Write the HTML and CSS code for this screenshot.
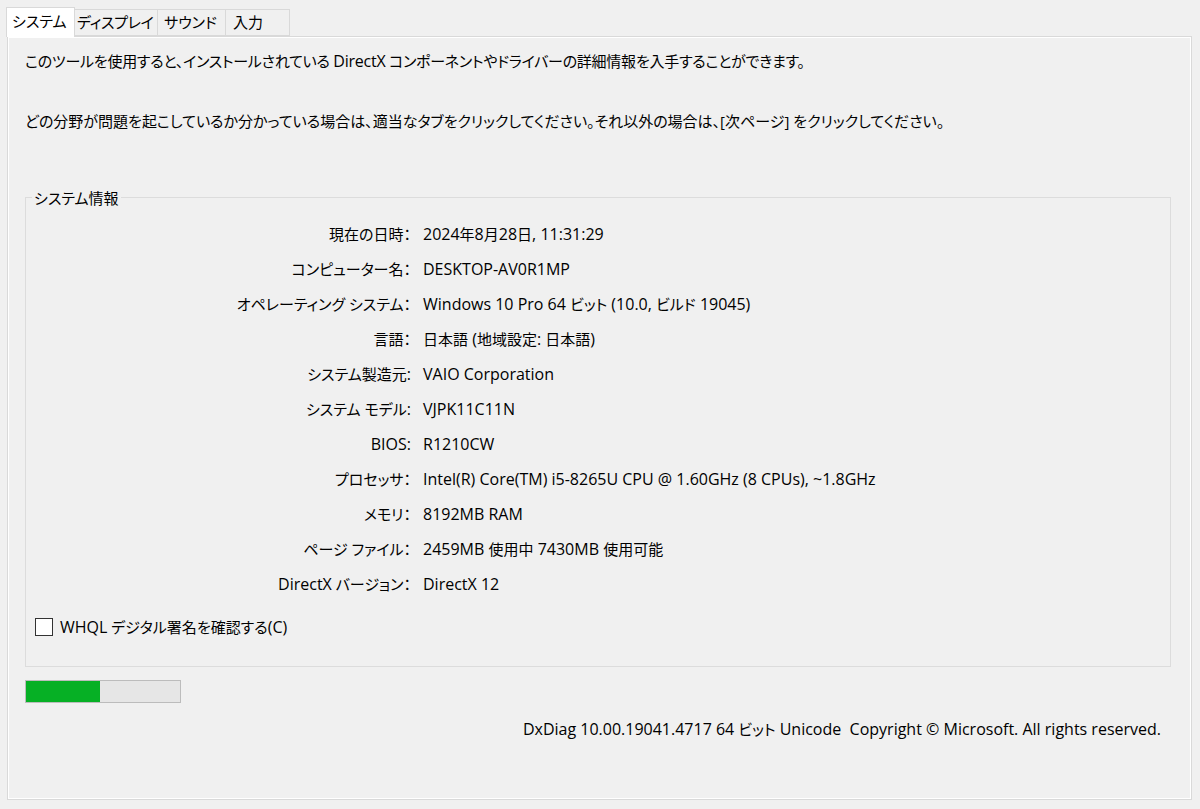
FILE: index.html
```html
<!DOCTYPE html>
<html lang="ja">
<head>
    <meta charset="UTF-8">
    <meta name="viewport" content="width=device-width, initial-scale=1.0">
    <title>DirectX 診断ツール</title>
    <link rel="stylesheet" href="styles.css">
</head>
<body>
    <div class="tabs">
        <div class="tab active">システム</div>
        <div class="tab">ディスプレイ</div>
        <div class="tab">サウンド</div>
        <div class="tab">入力</div>
    </div>

    <div class="panel">
        <p class="intro">このツールを使用すると、インストールされている <span class="en">DirectX</span> コンポーネントやドライバーの詳細情報を入手することができます。</p>
        <p class="intro">どの分野が問題を起こしているか分かっている場合は、適当なタブをクリックしてください。それ以外の場合は、[次ページ] をクリックしてください。</p>

        <fieldset class="group">
            <legend>システム情報</legend>
            <div class="info">
                <div class="label">現在の日時：</div>
                <div class="value">2024<span class="ja">年</span>8<span class="ja">月</span>28<span class="ja">日</span>, 11:31:29</div>
                <div class="label">コンピューター名：</div>
                <div class="value">DESKTOP-AV0R1MP</div>
                <div class="label">オペレーティング システム：</div>
                <div class="value">Windows 10 Pro 64 <span class="ja">ビット</span> (10.0, <span class="ja">ビルド</span> 19045)</div>
                <div class="label">言語：</div>
                <div class="value"><span class="ja">日本語</span> (<span class="ja">地域設定</span>: <span class="ja">日本語</span>)</div>
                <div class="label">システム製造元<span class="en">:</span></div>
                <div class="value">VAIO Corporation</div>
                <div class="label">システム モデル<span class="en">:</span></div>
                <div class="value">VJPK11C11N</div>
                <div class="label"><span class="en">BIOS:</span></div>
                <div class="value">R1210CW</div>
                <div class="label">プロセッサ：</div>
                <div class="value">Intel(R) Core(TM) i5-8265U CPU @ 1.60GHz (8 CPUs), ~1.8GHz</div>
                <div class="label">メモリ：</div>
                <div class="value">8192MB RAM</div>
                <div class="label">ページ ファイル：</div>
                <div class="value">2459MB <span class="ja">使用中</span> 7430MB <span class="ja">使用可能</span></div>
                <div class="label"><span class="en">DirectX</span> バージョン：</div>
                <div class="value">DirectX 12</div>
            </div>
            <label class="check">
                <span class="box"></span>
                <span><span class="en">WHQL</span> デジタル署名を確認する<span class="en">(C)</span></span>
            </label>
        </fieldset>

        <div class="progress">
            <div class="progress-fill" style="width: 48%"></div>
        </div>

        <div class="footer">DxDiag 10.00.19041.4717 64 <span class="ja">ビット</span> Unicode&nbsp; Copyright © Microsoft. All rights reserved.</div>
    </div>
</body>
</html>
```

FILE: styles.css
```css
body {
    font-family: "Open Sans", "Noto Sans CJK JP", sans-serif;
    font-feature-settings: "palt";
    font-size: 15px;
    color: #000;
    background-color: #f0f0f0;
    margin: 0;
    width: 1200px;
    height: 809px;
    overflow: hidden;
}

/* latin runs are drawn a size up, japanese a size down */
.en {
    font-size: 16px;
}

.ja {
    font-size: 15px;
}

.tabs {
    display: flex;
    align-items: flex-end;
    height: 29px;
    padding: 7px 0 0 6px;
}

.tab {
    height: 27px;
    line-height: 24px;
    padding: 0 0 0 4px;
    border: 1px solid #d9d9d9;
    border-left: none;
    background-color: #f0f0f0;
    box-sizing: border-box;
    white-space: nowrap;
    overflow: hidden;
}

    .tab:nth-child(2) {
        width: 83px;
        padding-left: 2px;
        letter-spacing: -0.3px;
    }

    .tab:nth-child(3) {
        width: 68px;
        padding-left: 6px;
    }

    .tab:nth-child(4) {
        width: 64px;
        padding-left: 7px;
    }

    .tab.active {
        position: relative;
        z-index: 1;
        width: 69px;
        height: 30px;
        margin-bottom: -1px;
        line-height: 27px;
        background-color: #fff;
        border-left: 1px solid #d9d9d9;
        border-bottom: none;
        padding-left: 5px;
    }

.panel {
    margin: 0 8px 0 7px;
    height: 762px;
    border: 1px solid #d9d9d9;
    box-shadow: inset 0 0 0 1px #fff;
    padding: 0 20px 0 17px;
    display: flex;
    flex-direction: column;
}

.intro {
    margin: 13px 0 20px;
    line-height: 22px;
}

    .intro:first-child {
        letter-spacing: -0.25px;
    }

    .intro + .intro {
        margin-top: 18px;
    }

.group {
    margin: 35px 0 0 0;
    padding: 8px 0 28px 0;
    border: 1px solid #dcdcdc;
    min-inline-size: 0;
}

    .group legend {
        padding: 0 2px;
        margin-left: 6px;
    }

.info {
    display: grid;
    grid-template-columns: 385px 1fr;
    column-gap: 12px;
    grid-auto-rows: 35px;
    align-items: center;
}

.label {
    text-align: right;
}

.value {
    font-size: 16px;
}

.check {
    display: flex;
    align-items: center;
    gap: 7px;
    margin: 15px 0 0 9px;
}

.box {
    width: 16px;
    height: 16px;
    border: 1px solid #333;
    background: #fff;
}

.progress {
    width: 154px;
    height: 21px;
    margin-top: 13px;
    border: 1px solid #bcbcbc;
    background-color: #e6e6e6;
}

.progress-fill {
    height: 100%;
    background-color: #06b025;
}

.footer {
    margin-top: 15px;
    font-size: 16px;
    text-align: right;
    padding-right: 10px;
}
```
